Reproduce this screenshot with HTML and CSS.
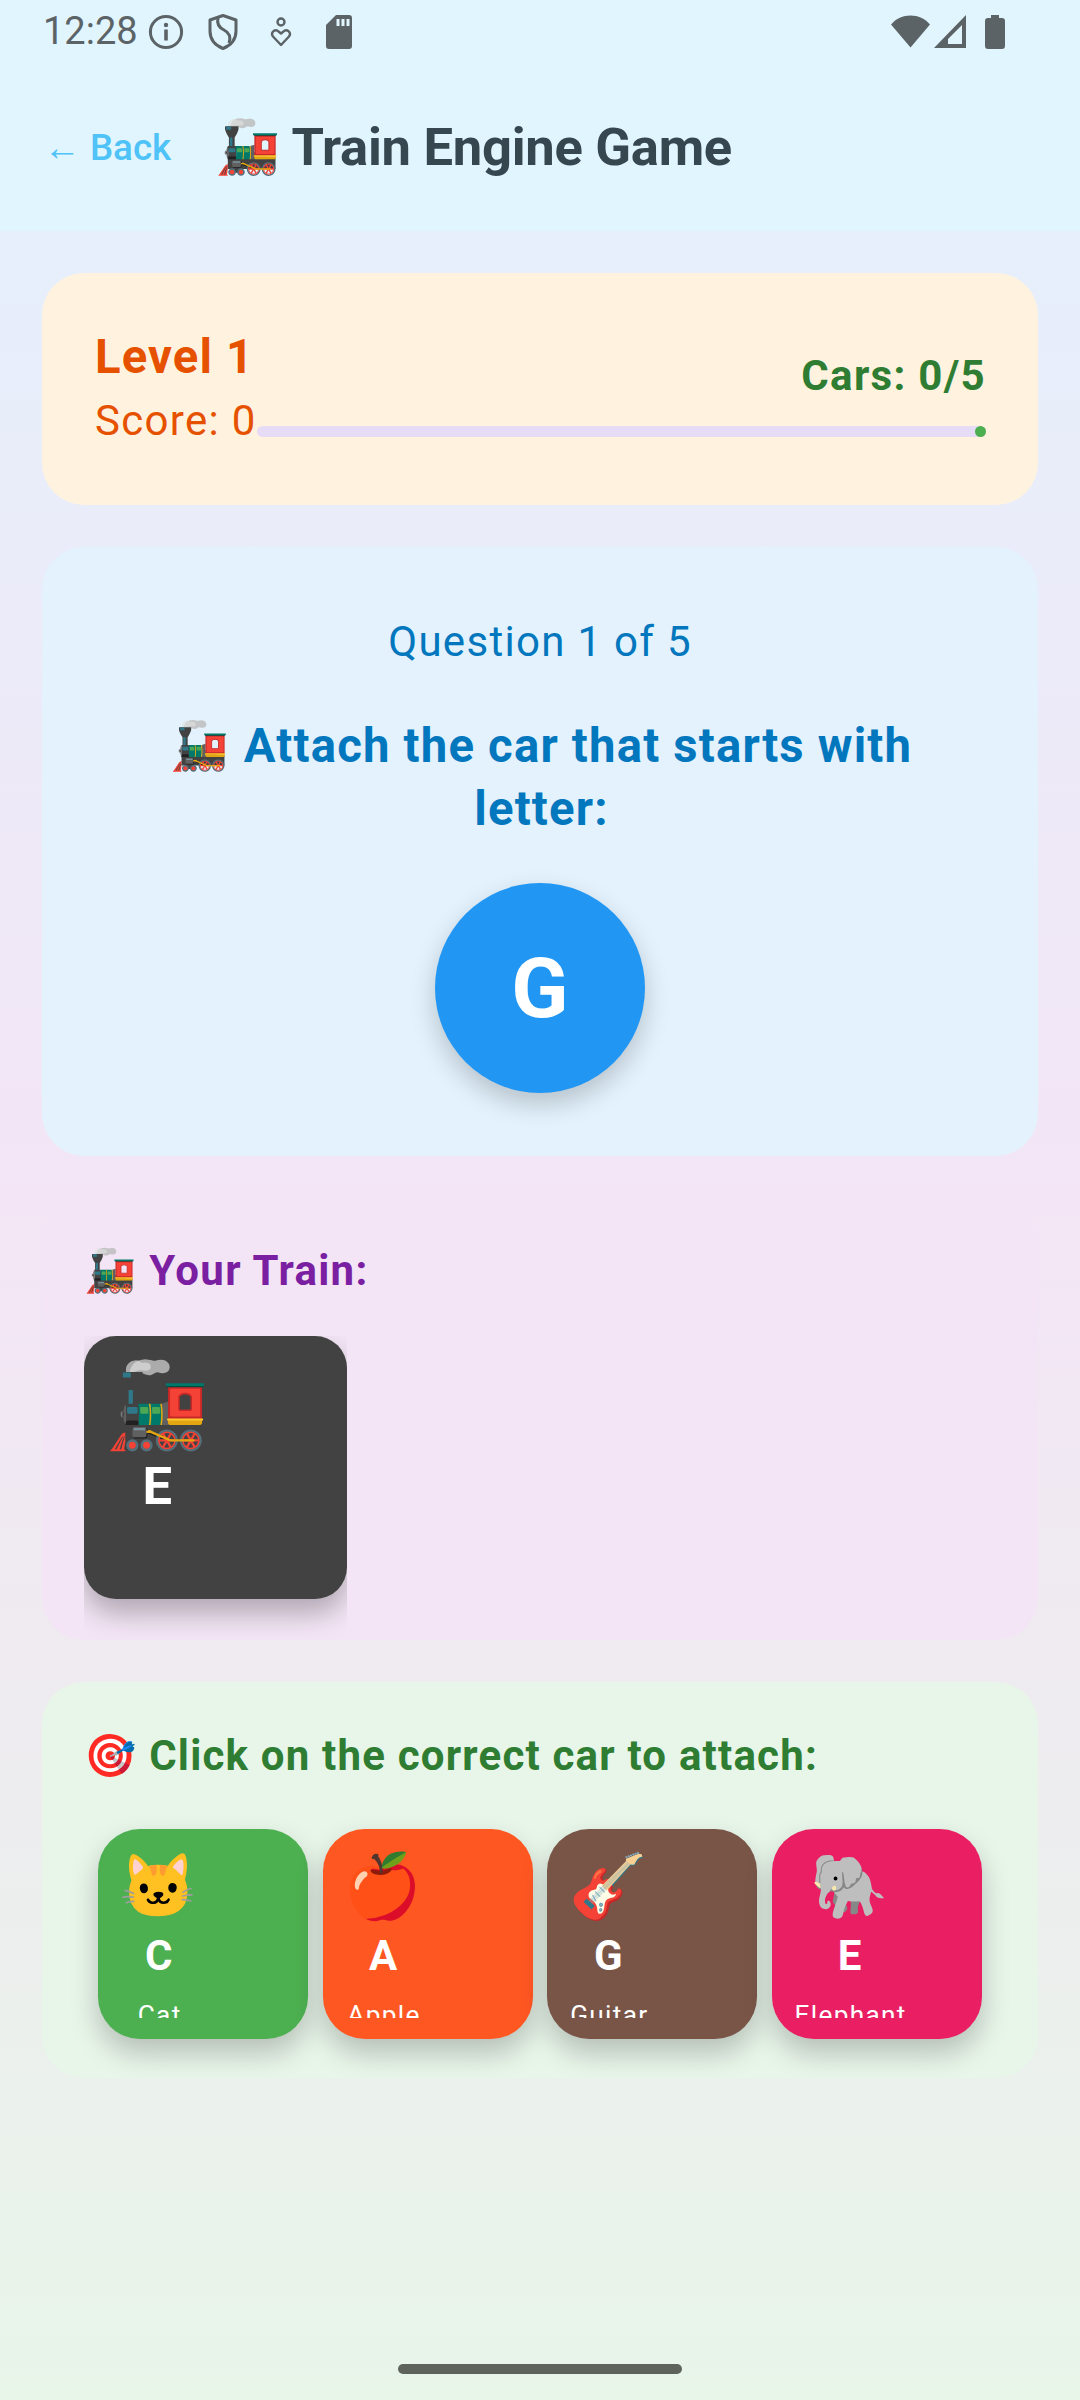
FILE: index.html
```html
<!DOCTYPE html>
<html lang="en">
<head>
<meta charset="utf-8">
<title>Train Engine Game</title>
<link rel="stylesheet" href="styles.css">
</head>
<body>
<div class="screen">
  <header class="top">
    <div class="status">
      <span class="time">12:28</span>
      <svg class="ic ic-info" viewBox="0 0 36 36"><circle cx="18" cy="18" r="15.6" fill="none" stroke="currentColor" stroke-width="3"/><rect x="16.2" y="15.5" width="3.6" height="11" fill="currentColor"/><circle cx="18" cy="11" r="2.2" fill="currentColor"/></svg>
      <svg class="ic ic-shield" viewBox="0 0 30 36"><path d="M15 1.5 28 6v11c0 8.500-5.500 14.500-13 17.500C7.500 31.500 2 25.500 2 17V6z" fill="none" stroke="currentColor" stroke-width="3" stroke-linejoin="round"/><path d="M10 4c-1.500 6 1 9.500 6 12 5 2.500 7.500 6 5 13" fill="none" stroke="currentColor" stroke-width="3"/></svg>
      <svg class="ic ic-care" viewBox="0 0 22 30"><circle cx="11" cy="5" r="3.500" fill="none" stroke="currentColor" stroke-width="2.400"/><path d="M11 28 3 19.500c-3-4 2.500-8.500 5.500-5L11 16.500l2.500-2c3-3.500 8.500 1 5.500 5z" fill="none" stroke="currentColor" stroke-width="2.400" stroke-linejoin="round"/></svg>
      <svg class="ic ic-sd" viewBox="0 0 26 34"><path d="M10 0h13a3 3 0 0 1 3 3v28a3 3 0 0 1-3 3H3a3 3 0 0 1-3-3V10z" fill="currentColor"/><path d="M10.500 4h3v7h-3zM15.500 4h3v7h-3zM20.500 4h3v7h-3z" fill="#e1f5fe"/></svg>
      <span class="status-gap"></span>
      <svg class="ic ic-wifi" viewBox="0 0 39 33"><path d="M19.500 32.500 0 9.500C5 3.500 12 .500 19.500 .500S34 3.500 39 9.500z" fill="currentColor"/></svg>
      <svg class="ic ic-signal" viewBox="0 0 32 33"><path fill-rule="evenodd" d="M32 0v33H0zM28 10 14 24v5h14z" fill="currentColor"/></svg>
      <svg class="ic ic-battery" viewBox="0 0 20 34"><path d="M6 0h8v3h3a3 3 0 0 1 3 3v25a3 3 0 0 1-3 3H3a3 3 0 0 1-3-3V6a3 3 0 0 1 3-3h3z" fill="currentColor"/></svg>
    </div>
    <div class="bar">
      <span class="back">← Back</span>
      <h1 class="title">🚂 Train Engine Game</h1>
    </div>
  </header>

  <main class="content">
    <section class="card level">
      <div class="level-left">
        <div class="level-name">Level 1</div>
        <div class="level-score">Score: 0</div>
      </div>
      <div class="level-right">
        <div class="cars">Cars: 0/5</div>
        <div class="progress"><span class="progress-stop"></span></div>
      </div>
    </section>

    <section class="card question">
      <div class="q-count">Question 1 of 5</div>
      <h2 class="q-text">🚂 Attach the car that starts with letter:</h2>
      <div class="q-letter">G</div>
    </section>

    <section class="card train">
      <h3 class="train-title">🚂 Your Train:</h3>
      <div class="car-slot">
        <div class="car">
          <div class="car-inner">
            <span class="car-emoji">🚂</span>
            <span class="car-letter">E</span>
          </div>
        </div>
      </div>
    </section>

    <section class="card pick">
      <h3 class="pick-title">🎯 Click on the correct car to attach:</h3>
      <div class="choices">
        <div class="choice c-green"><div class="choice-inner"><span class="choice-emoji">🐱</span><span class="choice-letter">C</span><span class="choice-label">Cat</span></div></div>
        <div class="choice c-orange"><div class="choice-inner"><span class="choice-emoji">🍎</span><span class="choice-letter">A</span><span class="choice-label">Apple</span></div></div>
        <div class="choice c-brown"><div class="choice-inner"><span class="choice-emoji">🎸</span><span class="choice-letter">G</span><span class="choice-label">Guitar</span></div></div>
        <div class="choice c-pink"><div class="choice-inner"><span class="choice-emoji">🐘</span><span class="choice-letter">E</span><span class="choice-label">Elephant</span></div></div>
      </div>
    </section>
  </main>
  <div class="home-pill"></div>
</div>
</body>
</html>
```
FILE: styles.css
```css
* { box-sizing: border-box; }
html, body { margin: 0; padding: 0; }
body { font-family: Roboto, "Noto Color Emoji", sans-serif; }
h1, h2, h3 { margin: 0; }

.screen {
  position: relative;
  width: 1080px;
  height: 2400px;
  overflow: hidden;
  background: linear-gradient(180deg, #e3f2fd 0%, #f3e5f5 50%, #e8f5e9 100%);
}

.top { background: #e1f5fe; height: 231px; }
.status {
  height: 63px;
  display: flex;
  align-items: center;
  padding: 0 75px 0 43px;
  color: #5b6366;
}
.time { font-size: 38px; line-height: 63px; }
.ic { display: block; flex: none; }
.ic-info { width: 36px; height: 36px; margin-left: 10px; }
.ic-shield { width: 30px; height: 36px; margin-left: 24px; }
.ic-care { width: 22px; height: 30px; margin-left: 32px; }
.ic-sd { width: 26px; height: 34px; margin-left: 34px; }
.status-gap { flex: 1; }
.ic-wifi { width: 39px; height: 33px; }
.ic-signal { width: 32px; height: 33px; margin-left: 4px; }
.ic-battery { width: 20px; height: 34px; margin-left: 19px; }

.bar { height: 168px; display: flex; align-items: center; padding-left: 44px; }
.back { font-size: 36.750px; font-weight: 500; color: #4fc3f7; width: 171px; flex: none; }
.title { font-size: 52.500px; font-weight: 700; color: #37474f; white-space: nowrap; letter-spacing: -0.270px; }

.content { padding: 42px; display: flex; flex-direction: column; gap: 42px; }
.card { border-radius: 42px; }

.level {
  height: 232px;
  background: #fff3e0;
  padding: 0 52px 0 53px;
  display: flex;
  align-items: center;
}
.level-left { flex: none; }
.level-name { font-size: 47.250px; font-weight: 700; color: #e65100; line-height: 55px; letter-spacing: 1.150px; position: relative; top: -3px; }
.level-score { font-size: 42px; color: #e65100; line-height: 49px; margin-top: 9px; letter-spacing: 1.300px; position: relative; top: -1px; }
.level-right { flex: 1; display: flex; flex-direction: column; align-items: flex-end; padding-top: 10px; }
.cars { font-size: 42px; font-weight: 700; color: #2e7d32; line-height: 49px; letter-spacing: 1.300px; }
.progress {
  position: relative;
  align-self: stretch;
  height: 11px;
  margin-top: 26px;
  border-radius: 6px;
  background: #e7dcf6;
}
.progress-stop {
  position: absolute;
  right: 0;
  top: 0;
  width: 11px;
  height: 11px;
  border-radius: 50%;
  background: #4caf50;
}

.question {
  height: 609px;
  background: #e3f2fd;
  padding: 70px 63px 0 66px;
  text-align: center;
  display: flex;
  flex-direction: column;
  align-items: center;
}
.q-count { font-size: 42px; line-height: 49px; color: #0277bd; letter-spacing: 1.300px; margin-left: -3px; }
.q-text { font-size: 47.250px; font-weight: 700; line-height: 63px; color: #0277bd; margin-top: 49px; letter-spacing: 1.200px; }
.q-letter {
  width: 210px;
  height: 210px;
  margin-top: 42px;
  margin-left: -3px;
  border-radius: 50%;
  background: #2196f3;
  color: #fff;
  font-size: 84px;
  font-weight: 700;
  display: flex;
  align-items: center;
  justify-content: center;
  box-shadow: 0 11px 26px rgba(0, 0, 0, 0.2);
}

.train {
  height: 442px;
  background: #f3e5f5;
  padding: 48px 42px 0;
}
.train-title { font-size: 42px; font-weight: 700; line-height: 49px; color: #7b1fa2; letter-spacing: 1.300px; }
.car-slot { width: 263px; height: 304px; margin-top: 41px; overflow: hidden; }
.car {
  width: 263px;
  height: 263px;
  padding: 21px;
  border-radius: 32px;
  background: #424242;
  box-shadow: 0 14px 28px rgba(0, 0, 0, 0.28);
}
.car-inner { display: inline-flex; flex-direction: column; align-items: center; }
.car-emoji { font-size: 84px; line-height: 98px; }
.car-letter { font-size: 52.500px; font-weight: 700; color: #fff; line-height: 62px; }

.pick {
  height: 396px;
  background: #e8f5e9;
  padding: 49px 42px 0;
  overflow: hidden;
}
.pick-title { font-size: 42px; font-weight: 700; line-height: 49px; color: #2e7d32; letter-spacing: 1.200px; }
.choices { display: flex; justify-content: space-evenly; margin-top: 49px; }
.choice {
  width: 210px;
  height: 210px;
  flex: none;
  padding: 21px;
  border-radius: 42px;
  box-shadow: 0 14px 28px rgba(0, 0, 0, 0.22);
  color: #fff;
}
.choice-inner {
  height: 168px;
  overflow: hidden;
  display: inline-flex;
  flex-direction: column;
  align-items: center;
}
.choice-emoji { font-size: 63px; line-height: 74px; }
.choice-letter { font-size: 42px; font-weight: 700; line-height: 49px; margin-top: 7px; }
.choice-label { font-size: 26.250px; line-height: 31px; margin-top: 20px; padding-left: 2px; letter-spacing: 1.300px; white-space: nowrap; flex: none; }
.c-green { background: #4caf50; }
.c-orange { background: #ff5722; }
.c-brown { background: #795548; }
.c-pink { background: #e91e63; }

.home-pill {
  position: absolute;
  left: 398px;
  top: 2364px;
  width: 284px;
  height: 10px;
  border-radius: 5px;
  background: #5e645c;
}
```
